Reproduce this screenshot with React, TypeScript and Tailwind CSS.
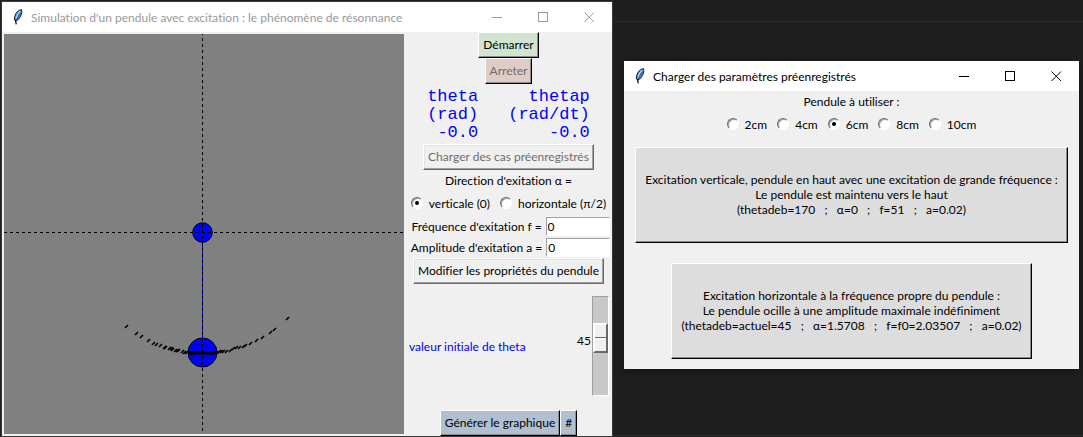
import type { ReactNode } from "react";

const RELIEF =
  "border border-t-white border-l-white pb-[2px] text-center whitespace-nowrap leading-[15px]";
const DARK = "border-r-black border-b-black shadow-[inset_-1px_-1px_0_#8c8c8c]";
const SOFT =
  "border-r-[#696969] border-b-[#696969] shadow-[inset_-1px_-1px_0_#a0a0a0,inset_1px_1px_0_#e3e3e3]";

const TRAIL: [number, number][] = [
  [122, 292], [132, 299], [137, 302], [144, 306], [149, 309], [152, 310],
  [156, 311], [160, 313], [161, 313], [165, 314], [167, 314], [168, 315],
  [171, 316], [173, 316], [174, 316], [178, 317], [180, 318], [182, 318],
  [185, 318], [187, 319], [189, 319], [208, 319], [210, 318], [212, 318],
  [214, 318], [215, 317], [217, 317], [219, 317], [222, 317], [226, 316],
  [229, 314], [232, 313], [235, 313], [239, 312], [241, 311], [246, 309],
  [252, 306], [258, 303], [266, 298], [270, 295], [283, 284],
];

function Feather() {
  return (
    <svg viewBox="0 0 16 16" className="h-4 w-4" aria-hidden="true">
      <path
        d="M11.5 .6 L8.6 1.6 L6.2 4 L4.6 7.6 L4.4 11 L5.6 12 L8.4 10.6 L10.6 7.4 L11.8 3.6 Z"
        fill="#4d8ad8"
        stroke="#15202e"
        strokeWidth="1"
      />
      <path d="M10.4 2 L7.6 5 L6 9.4" fill="none" stroke="#b9d8fa" strokeWidth="1.1" />
      <path d="M10.2 3.6 L8 8 L6 12" fill="none" stroke="#24508f" strokeWidth=".8" />
      <path d="M5.6 11 L6.2 15.4" fill="none" stroke="#000" strokeWidth="1.2" />
    </svg>
  );
}

function TitleBar({ title, tone }: { title: string; tone: string }) {
  return (
    <header className={`flex h-[30px] items-center bg-white pl-2 ${tone}`}>
      <Feather />
      <h1 className="min-w-0 flex-1 truncate pl-[5px] text-[12px] leading-[15px]">{title}</h1>
      <button type="button" aria-label="Réduire" className="flex h-full w-[46px] items-center justify-center">
        <svg width="11" height="11" aria-hidden="true" shapeRendering="crispEdges">
          <path d="M0 5.5H10" stroke="currentColor" />
        </svg>
      </button>
      <button type="button" aria-label="Agrandir" className="flex h-full w-[46px] items-center justify-center">
        <svg width="11" height="11" aria-hidden="true" shapeRendering="crispEdges">
          <path d="M.5 .5H9.5V9.5H.5Z" fill="none" stroke="currentColor" />
        </svg>
      </button>
      <button type="button" aria-label="Fermer" className="flex h-full w-[46px] items-center justify-center">
        <svg width="11" height="11" aria-hidden="true">
          <path d="M.5 .5L10 10M10 .5L.5 10" stroke="currentColor" />
        </svg>
      </button>
    </header>
  );
}

function Radio({ name, checked, children }: { name: string; checked?: boolean; children: ReactNode }) {
  return (
    <label className="flex items-center gap-[6px] whitespace-nowrap">
      <input
        type="radio"
        name={name}
        defaultChecked={checked}
        className="flex size-3 appearance-none items-center justify-center rounded-full border border-t-[#696969] border-r-white border-b-white border-l-[#696969] bg-white shadow-[inset_1px_1px_0_#a0a0a0] checked:before:size-1 checked:before:rounded-full checked:before:bg-black checked:before:content-['']"
      />
      {children}
    </label>
  );
}

function Entry({ id, label }: { id: string; label: string }) {
  return (
    <div className="flex h-[21px] items-center justify-center gap-1">
      <label htmlFor={id} className="whitespace-nowrap">{label}</label>
      <input
        id={id}
        type="text"
        defaultValue="0"
        className="h-[19px] w-16 border border-t-[#a0a0a0] border-r-white border-b-white border-l-[#a0a0a0] bg-white px-px"
      />
    </div>
  );
}

function PendulumView() {
  return (
    <svg width="400" height="400" role="img" aria-label="Pendule" className="shrink-0 bg-[#808080]">
      <path d="M198.500 198V318" stroke="#00f" />
      <circle cx="198.500" cy="198.500" r="9.800" fill="#00f" stroke="#000" />
      <circle cx="198.500" cy="318.500" r="14.500" fill="#00f" stroke="#000" />
      <g stroke="#000" strokeDasharray="3 3" shapeRendering="crispEdges">
        <path d="M198.500 0V400" strokeDashoffset="2" />
        <path d="M0 198.500H400" />
      </g>
      <path d="M186 319H211" stroke="#000" strokeWidth="3" />
      {TRAIL.map(([x, y]) => (
        <path key={x} d={`M${x - 1} ${y + 2}L${x + 2} ${y - 1}`} stroke="#000" strokeWidth="1.600" />
      ))}
    </svg>
  );
}

function Controls() {
  return (
    <div className="flex min-w-0 flex-1 flex-col items-center pl-px">
      <button type="button" className={`${RELIEF} ${DARK} h-[26px] bg-[#d0e4d0] px-1`}>Démarrer</button>
      <button type="button" disabled className={`${RELIEF} ${DARK} h-[26px] bg-[#e0ccc6] px-1 text-[#6d6d6d]`}>
        Arreter
      </button>
      <div className="mt-1 flex gap-[30px] text-right font-['Liberation_Mono',monospace] text-[17px] leading-[18px] text-[#0000ff]">
        <p>theta<br />(rad)<br />-0.0</p>
        <p>thetap<br />(rad/dt)<br />-0.0</p>
      </div>
      <button type="button" disabled className={`${RELIEF} ${SOFT} mt-[2px] h-[26px] px-1 text-[#6d6d6d]`}>
        Charger des cas préenregistrés
      </button>
      <fieldset className="flex flex-col items-center">
        <legend className="mx-auto pt-[3px]">Direction d'exitation α =</legend>
        <div className="flex h-[30px] items-center gap-[10px]">
          <Radio name="direction" checked>verticale (0)</Radio>
          <Radio name="direction">horizontale (π/2)</Radio>
        </div>
      </fieldset>
      <div className="-mt-[2px] flex flex-col pl-1">
        <Entry id="frequence" label="Fréquence d'exitation f =" />
        <Entry id="amplitude" label="Amplitude d'exitation a =" />
      </div>
      <button type="button" className={`${RELIEF} ${SOFT} h-[26px] px-1`}>
        Modifier les propriétés du pendule
      </button>
      <div className="mt-3 flex w-full items-center justify-between pr-[3px] pl-1">
        <label htmlFor="theta" className="text-[#0000ff]">valeur initiale de theta</label>
        <div className="flex items-center gap-px">
          <output htmlFor="theta" className="pb-3">45</output>
          <input
            id="theta"
            type="range"
            min="-180"
            max="180"
            defaultValue="45"
            className="h-[100px] w-[17px] appearance-none border border-t-[#a0a0a0] border-r-white border-b-white border-l-[#a0a0a0] bg-[#c8c8c8] [direction:rtl] [writing-mode:vertical-lr] [&::-webkit-slider-thumb]:h-[30px] [&::-webkit-slider-thumb]:w-[15px] [&::-webkit-slider-thumb]:appearance-none [&::-webkit-slider-thumb]:border-2 [&::-webkit-slider-thumb]:border-t-white [&::-webkit-slider-thumb]:border-r-[#696969] [&::-webkit-slider-thumb]:border-b-[#696969] [&::-webkit-slider-thumb]:border-l-white [&::-webkit-slider-thumb]:bg-[linear-gradient(#f0f0f0_12px,#696969_12px,#696969_13px,#fff_13px,#fff_14px,#f0f0f0_14px)]"
          />
        </div>
      </div>
      <div className="mt-auto flex">
        <button type="button" className={`${RELIEF} ${DARK} h-[26px] bg-[#b0c0d0] px-1`}>Générer le graphique</button>
        <button type="button" className={`${RELIEF} ${DARK} h-[26px] bg-[#b0c0d0] px-1`}>#</button>
      </div>
    </div>
  );
}

const LENGTHS = ["2cm", "4cm", "6cm", "8cm", "10cm"];

function PresetButton({ lines }: { lines: string[] }) {
  return (
    <button type="button" className={`${RELIEF} ${DARK} h-24 bg-[#dddddd] px-[9px] whitespace-pre`}>
      {lines.map((line) => (
        <span key={line} className="block">{line}</span>
      ))}
    </button>
  );
}

export default function App() {
  return (
    <main className="grid min-h-screen grid-cols-[minmax(0,613fr)_minmax(0,470fr)] bg-[#1f1f1f] font-['Lato','Noto_Sans',sans-serif] text-[12px] leading-[15px] text-black [font-variant-ligatures:none]">
      <div className="pt-px pl-px">
        <section className="border border-[#3a3838] bg-[#f0f0f0]">
          <TitleBar title="Simulation d'un pendule avec excitation : le phénomène de résonnance" tone="text-[#999999]" />
          <div className="flex">
            <div className="p-[2px] pr-0">
              <PendulumView />
            </div>
            <Controls />
          </div>
        </section>
      </div>
      <div className="flex flex-col pb-px">
        <div className="h-[22px] border-b border-[#2b2b2b]" />
        <section className="mt-[39px] mr-1 ml-[11px] bg-[#f0f0f0] shadow-[0_2px_10px_rgba(0,0,0,0.4)]">
          <TitleBar title="Charger des paramètres préenregistrés" tone="text-black" />
          <div className="flex flex-col items-center pb-[10px]">
            <fieldset className="flex flex-col items-center">
              <legend className="mx-auto pt-[3px]">Pendule à utiliser :</legend>
              <div className="flex h-[30px] items-center gap-[10px]">
                {LENGTHS.map((length) => (
                  <Radio key={length} name="longueur" checked={length === "6cm"}>{length}</Radio>
                ))}
              </div>
            </fieldset>
            <div className="mt-2 flex flex-col items-center gap-5">
              <PresetButton
                lines={[
                  "Excitation verticale, pendule en haut avec une excitation de grande fréquence :",
                  "Le pendule est maintenu vers le haut",
                  "(thetadeb=170   ;   α=0   ;   f=51   ;   a=0.02)",
                ]}
              />
              <PresetButton
                lines={[
                  "Excitation horizontale à la fréquence propre du pendule :",
                  "Le pendule ocille à une amplitude maximale indéfiniment",
                  "(thetadeb=actuel=45   ;   α=1.5708   ;   f=f0=2.03507   ;   a=0.02)",
                ]}
              />
            </div>
          </div>
        </section>
        <div className="flex-1 border-b border-[#2b2b2b]" />
      </div>
    </main>
  );
}
